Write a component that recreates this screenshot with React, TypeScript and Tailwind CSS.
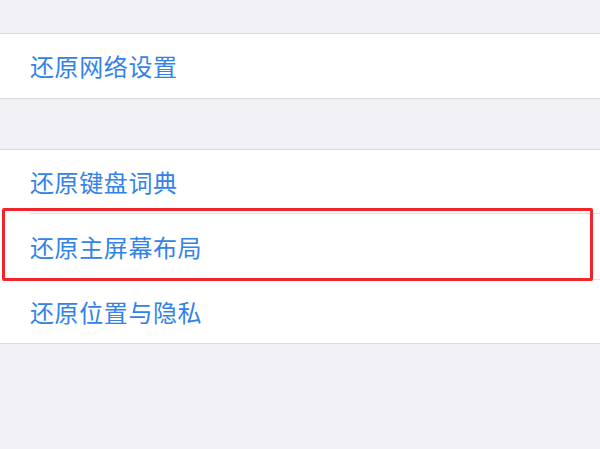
const font = { fontFamily: '"Noto Sans CJK SC", "Noto Sans", sans-serif' };

function Row({ label, h, last }: { label: string; h: string; last?: boolean }) {
  return (
    <div className="pl-[30px] bg-white">
      <div
        className={`${h} flex items-center text-[24px] tracking-[0.6px] text-[#3382ea] ${
          last ? "" : "border-b border-[#e2e2e6]"
        }`}
      >
        {label}
      </div>
    </div>
  );
}

export default function App() {
  return (
    <div className="w-[600px] h-[449px] bg-[#f2f2f6] overflow-hidden" style={font}>
      <div className="h-[33px]" />
      <div className="border-y border-[#dadade]">
        <div className="pl-[30px] bg-white">
          <div className="h-[64px] flex items-center text-[24px] tracking-[0.6px] text-[#3382ea]">
            还原网络设置
          </div>
        </div>
      </div>
      <div className="h-[50px]" />
      <div className="relative border-y border-[#dadade]">
        <Row label="还原键盘词典" h="h-[64px]" />
        <Row label="还原主屏幕布局" h="h-[66px]" />
        <Row label="还原位置与隐私" h="h-[63px]" last />
        <div className="absolute left-[2px] top-[58px] w-[591px] h-[73px] border-[3px] border-[#f2262a] rounded-[2px]" />
      </div>
    </div>
  );
}
